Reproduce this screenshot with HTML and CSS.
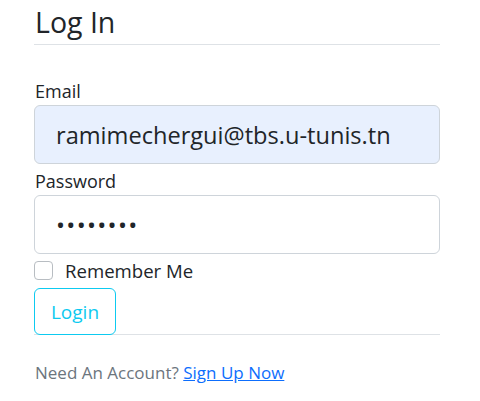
FILE: index.html
```html
<!DOCTYPE html>
<html lang="en">
<head>
<meta charset="utf-8">
<title>Log In</title>
<link rel="stylesheet" href="styles.css">
</head>
<body>
<div class="content">
  <form class="login-form">
    <fieldset class="fieldset">
      <div class="legend">Log In</div>
      <div class="form-group group-email">
        <label class="form-label" for="email">Email</label>
        <input class="form-control autofilled" id="email" type="email" value="ramimechergui@tbs.u-tunis.tn">
      </div>
      <div class="form-group group-password">
        <label class="form-label" for="password">Password</label>
        <input class="form-control password" id="password" type="password" value="12345678">
      </div>
      <div class="form-check">
        <span class="check-box"></span>
        <label class="check-label">Remember Me</label>
      </div>
    </fieldset>
    <div class="actions">
      <button type="button" class="btn-outline-info">Login</button>
    </div>
  </form>
  <div class="footer-line">
    <span class="muted">Need An Account? </span><a class="link" href="#">Sign Up Now</a>
  </div>
</div>
</body>
</html>
```

FILE: styles.css
```css
html, body {
  margin: 0;
  padding: 0;
  background: #ffffff;
}
body {
  font-family: "Open Sans", "Noto Sans", "Liberation Sans", sans-serif;
  color: #212529;
}
.content {
  width: 406px;
  padding-left: 34px;
}
.login-form {
  margin: 0;
}
.fieldset {
  border: 0;
  margin: 0;
  padding: 0;
  display: flex;
  flex-direction: column;
}
.legend {
  height: 44px;
  line-height: 44px;
  font-size: 28.5px;
  border-bottom: 1px solid #dee2e6;
  padding-left: 1px;
}
.form-group {
  display: flex;
  flex-direction: column;
}
.group-email {
  margin-top: 33px;
}
.group-password {
  margin-top: 4px;
}
.form-label {
  font-size: 18px;
  line-height: 27px;
  padding-left: 1px;
}
.form-control {
  box-sizing: border-box;
  height: 59px;
  width: 100%;
  border: 1px solid #ced4da;
  border-radius: 6px;
  padding: 0 21px;
  font-family: inherit;
  font-size: 23.6px;
  color: #212529;
  background: #ffffff;
  outline: none;
}
.password {
  letter-spacing: 1.3px;
  font-size: 24px;
}
.autofilled {
  background: #e8f0fe;
}
.form-check {
  display: flex;
  align-items: center;
  height: 32px;
  margin-top: 0;
}
.check-box {
  box-sizing: border-box;
  width: 19px;
  height: 19px;
  border: 1px solid #b8bdc2;
  border-radius: 4px;
  background: #fff;
}
.check-label {
  font-size: 18.6px;
  margin-left: 12px;
}
.actions {
  margin-top: 2px;
  border-bottom: 1px solid #dee2e6;
  display: flex;
}
.btn-outline-info {
  box-sizing: border-box;
  height: 47px;
  width: 82px;
  margin-bottom: -1px;
  background: #fff;
  border: 1px solid #0dcaf0;
  border-radius: 6px;
  color: #0dcaf0;
  font-family: inherit;
  font-size: 19px;
  padding: 0;
}
.footer-line {
  margin-top: 24px;
  font-size: 17px;
  line-height: 27px;
  padding-left: 1px;
}
.muted {
  color: #6c757d;
}
.link {
  color: #0d6efd;
  text-decoration: underline;
}
```
